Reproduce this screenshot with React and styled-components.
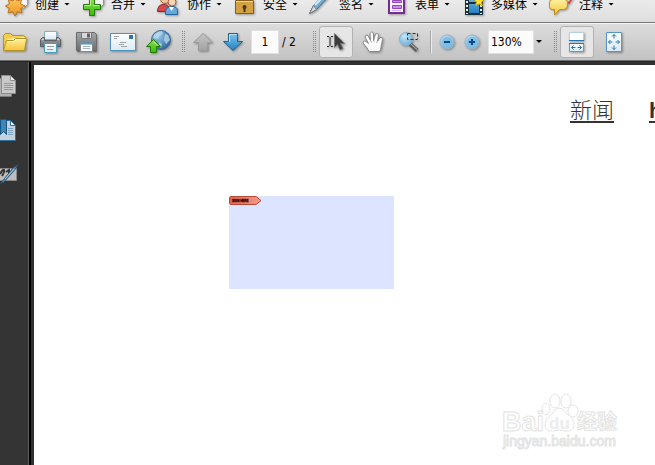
import React, { useState } from 'react';
import styled, { createGlobalStyle } from 'styled-components';

const GlobalStyle = createGlobalStyle`
	* {
		box-sizing: border-box;
	}
	body {
		margin: 0;
		background: #333333;
		font-family: 'DejaVu Sans Condensed', 'Noto Sans CJK SC', sans-serif;
		font-size: 12px;
		color: #000000;
	}
	button, input {
		font: inherit;
		color: inherit;
	}
`;

const Window = styled.div`
	height: 100vh;
	display: flex;
	flex-direction: column;
	overflow: hidden;
`;

const MenuBar = styled.nav`
	flex: none;
	height: 22px;
	display: flex;
	align-items: flex-end;
	gap: 11px;
	padding-left: 5px;
	overflow: hidden;
	background: linear-gradient(#ebebeb, #dedede);
`;

const MenuButton = styled.button`
	flex: none;
	height: 36px;
	display: flex;
	align-items: center;
	padding: 0;
	border: 0;
	background: none;
	line-height: 18px;
	font-family: 'Noto Sans CJK SC', sans-serif;
	white-space: nowrap;

	svg {
		flex: none;
		filter: drop-shadow(1px 1px 1px #00000055);
	}
`;

const MenuLabel = styled.span`
	margin: 0 5px 0 6px;
`;

const Caret = styled.span`
	width: 6px;
	height: 3px;
	background: #000000;
	clip-path: polygon(0 0, 100% 0, 50% 100%);
`;

const ToolBar = styled.div`
	flex: none;
	height: 39px;
	display: flex;
	align-items: center;
	padding-left: 2px;
	overflow: hidden;
	border-top: 1px solid #777777;
	border-bottom: 1px solid #6f6f6f;
	background: linear-gradient(#dddddd, #c2c2c2);
	box-shadow: inset 0 1px 0 #f4f4f4;
`;

const Group = styled.div`
	flex: none;
	display: flex;
	align-items: center;
	gap: ${(props) => props.$gap}px;
`;

const IconButton = styled.button`
	width: ${(props) => props.$width}px;
	height: 32px;
	display: flex;
	align-items: center;
	justify-content: center;
	padding: 0;
	border: 1px solid ${(props) => (props.$active ? '#b2b2b2' : 'transparent')};
	border-radius: 3px;
	background: ${(props) => (props.$active ? '#e6e6e6' : 'none')};

	svg {
		flex: none;
		filter: drop-shadow(1px 1px 1px #00000055);
	}
`;

const Grip = styled.div`
	flex: none;
	width: 4px;
	height: 22px;
	margin: 0 3px 0 9px;
	background: conic-gradient(#8a8a8a 25%, transparent 0) 0 0 / 2px 2px;
`;

const Separator = styled.div`
	flex: none;
	width: 2px;
	height: 22px;
	margin: 0 7px 0 3px;
	border-left: 1px solid #a6a6a6;
	border-right: 1px solid #ececec;
`;

const TextBox = styled.input`
	width: ${(props) => props.$width}px;
	height: 24px;
	padding: ${(props) => (props.$centered ? 0 : '0 2px')};
	border: 1px solid #e0e0e0;
	background: #fbfbfb;
	text-align: ${(props) => (props.$centered ? 'center' : 'left')};
`;

const PageTotal = styled.span`
	width: 21px;
	margin-left: 3px;
`;

const Spaced = styled.div`
	flex: none;
	display: flex;
	align-items: center;
	margin-left: ${(props) => props.$before}px;
`;

const DropButton = styled.button`
	width: 10px;
	height: 24px;
	display: flex;
	align-items: center;
	justify-content: center;
	padding: 0;
	border: 0;
	background: none;
`;

const Body = styled.div`
	flex: 1;
	min-height: 0;
	display: flex;
	border-top: 1px solid #262626;
`;

const SideBar = styled.aside`
	flex: none;
	width: 28px;
	display: flex;
	flex-direction: column;
	align-items: flex-start;
	gap: 12px;
	padding-top: 8px;
	overflow: hidden;
	background: #343434;
`;

const SideButton = styled.button`
	height: 32px;
	display: flex;
	align-items: center;
	padding: 0;
	border: 0;
	background: none;
`;

const Workspace = styled.main`
	flex: 1;
	min-width: 0;
	display: flex;
	padding: 3px 0 0 5px;
	border-left: 1px solid #5c5c5c;
	background: #303030;
	box-shadow: inset 2px 0 0 #000000;
`;

const Page = styled.article`
	position: relative;
	flex: 1;
	min-width: 0;
	overflow: hidden;
	background: #ffffff;
`;

const PageLinks = styled.div`
	display: flex;
	gap: 35px;
	padding: 30px 0 0 536px;
`;

const PageLink = styled.a`
	flex: none;
	color: #333333;
	font-family: 'Liberation Sans', 'Noto Sans CJK SC', sans-serif;
	font-size: 22px;
	font-weight: ${(props) => (props.$strong ? 700 : 300)};
	line-height: 32px;
	text-underline-offset: 3px;
	text-decoration-thickness: 2px;
`;

// Signature field dropped on the page at its own coordinates
const SignField = styled.div`
	position: absolute;
	left: 195px;
	top: 131px;
	width: 165px;
	height: 93px;
	background: #dde4ff;
`;

const SignTag = styled.svg`
	display: block;
`;

const Watermark = styled.svg`
	position: absolute;
	right: 32px;
	bottom: 10px;
`;

// Gradients shared by all the icons
const Gradients = () => (
	<svg width='0' height='0' style={{ position: 'absolute' }} aria-hidden='true'>
		<defs>
			<linearGradient id='gold' x2='0' y2='1'>
				<stop stopColor='#fff0a0' />
				<stop offset='1' stopColor='#f7c437' />
			</linearGradient>
			<linearGradient id='amber' x2='0' y2='1'>
				<stop stopColor='#ffc860' />
				<stop offset='1' stopColor='#ee9420' />
			</linearGradient>
			<linearGradient id='blue' x2='0' y2='1'>
				<stop stopColor='#7cc4ef' />
				<stop offset='1' stopColor='#2580c0' />
			</linearGradient>
			<linearGradient id='green' x2='0' y2='1'>
				<stop stopColor='#8de04e' />
				<stop offset='1' stopColor='#3cb80c' />
			</linearGradient>
			<linearGradient id='grey' x2='0' y2='1'>
				<stop stopColor='#c4c4c4' />
				<stop offset='1' stopColor='#a2a2a2' />
			</linearGradient>
			<linearGradient id='steel' x2='0' y2='1'>
				<stop stopColor='#a3a8aa' />
				<stop offset='1' stopColor='#656b6e' />
			</linearGradient>
			<linearGradient id='paper' x2='0' y2='1'>
				<stop stopColor='#ffffff' />
				<stop offset='1' stopColor='#d9eaf5' />
			</linearGradient>
			<radialGradient id='earth' cx='.35' cy='.3' r='.75'>
				<stop stopColor='#9ccbea' />
				<stop offset='1' stopColor='#2d669c' />
			</radialGradient>
			<radialGradient id='lens' cx='.4' cy='.3' r='.8'>
				<stop stopColor='#c6e6f8' />
				<stop offset='1' stopColor='#65acd9' />
			</radialGradient>
			<linearGradient id='tag'>
				<stop stopColor='#e4604f' />
				<stop offset='1' stopColor='#f59a86' />
			</linearGradient>
		</defs>
	</svg>
);

const StarDoc = () => (
	<svg width='24' height='28' viewBox='0 0 24 28'>
		<path d='M10.500.5h12v14l-4 4h-8z' fill='#f6f6f6' stroke='#9a9a9a' />
		<path
			d='M10 7l2.200 4 4.300-1.500-1 4.300L20 16l-4.200 2.300L17 23l-4.500-1.400L10 26l-2.400-4.400L3 23l1.300-4.700L.5 16l4-2.300L3.300 9.500 8 11z'
			fill='url(#amber)'
			stroke='#b8741c'
		/>
	</svg>
);

const PlusDoc = () => (
	<svg width='24' height='28' viewBox='0 0 24 28'>
		<path d='M10.500.5h12v14l-4 4h-8z' fill='#f3f3f3' stroke='#8e8e8e' />
		<path d='M8.500 8.500h5v6h6v5h-6v6h-5v-6h-6v-5h6z' fill='url(#green)' stroke='#1c7d0b' />
		<path d='M9.500 10v5.500h-6M12 15.500h6' fill='none' stroke='#b9f58e' />
	</svg>
);

const People = () => (
	<svg width='24' height='28' viewBox='0 0 24 28'>
		<circle cx='8' cy='9' r='4.500' fill='#efc49c' stroke='#a06540' />
		<path d='M.5 21.500q0-7 6-7t7 7z' fill='#d5484b' stroke='#8e2428' />
		<circle cx='15' cy='12' r='4' fill='#f7d3b0' stroke='#a5623b' />
		<path d='M8.500 24.500v-4q1-4 6-4 6 0 6 4v4z' fill='#65a8dc' stroke='#24639a' />
		<path d='M12 17l2.500 4 2.500-4z' fill='#ffffff' />
	</svg>
);

const Lock = () => (
	<svg width='24' height='28' viewBox='0 0 24 28'>
		<path d='M6 12V8q0-5 5-5t5 5v4' fill='none' stroke='#888888' strokeWidth='3' />
		<path d='M2.500 10.500h18v13h-18z' fill='#d3a13f' stroke='#86601d' />
		<path d='M3 11.500h17' stroke='#f6d684' />
		<path d='M10.500 17h2v5h-2z' fill='#493414' />
		<circle cx='11.500' cy='17' r='2' fill='#493414' />
	</svg>
);

const Pen = () => (
	<svg width='24' height='28' viewBox='0 0 24 28'>
		<path d='M.5 23.500l4-8L18 1l4 3L7.500 19.500z' fill='#6fadd8' stroke='#4c6b80' />
		<path d='M6 15L18 3' stroke='#d4ecfa' strokeWidth='2' />
		<path d='M.5 23.500l4-8 3 4z' fill='#dddddd' stroke='#777777' />
	</svg>
);

const FormDoc = () => (
	<svg width='24' height='28' viewBox='0 0 24 28'>
		<path d='M4 2h15v21H4z' fill='#fdf8ff' stroke='#762d93' strokeWidth='2' />
		<path d='M7.500 10.500h9v2h-9zM7.500 15.500h9v3h-9z' fill='#cf8ae4' stroke='#9b46b8' />
		<path d='M7 7.500h10' stroke='#9b46b8' />
		<path d='M7 20.500h9' stroke='#d9b3e6' />
	</svg>
);

const Film = () => (
	<svg width='24' height='28' viewBox='0 0 24 28'>
		<path d='M4 2h18v23H4z' fill='#19303d' />
		<path d='M8 4h10v8H8zM8 14h10v9H8z' fill='url(#blue)' />
		<path d='M6 3v21M20 3v21' stroke='#e4edf2' strokeWidth='2' strokeDasharray='2 2' />
		<path d='M18 5l1.500 4 4 .5-3 2.500 1 4-3.500-2-4 2 1.500-4-3-3 4-.5z' fill='#ffe02d' stroke='#c79d0c' />
	</svg>
);

const Comment = () => (
	<svg width='24' height='28' viewBox='0 0 24 28'>
		<path d='M14 16l4-4 2 1 4-6' fill='none' stroke='#e0443a' strokeWidth='2' />
		<path
			d='M3.500 9.500h12q3 0 3 3v3q0 4-4 4h-4l-5 5.500V19.500h-2q-3 0-3-3v-4q0-3 3-3z'
			fill='url(#gold)'
			stroke='#c18a14'
		/>
	</svg>
);

const Folder = () => (
	<svg width='26' height='26' viewBox='0 0 26 26'>
		<path d='M1.500 21.500v-15l2-2h5l2 2h11l2 2v12z' fill='#f5cc4e' stroke='#b8922c' />
		<path d='M3.500 19l2-9 17-2v10z' fill='#fff7c0' />
		<path d='M1.500 21.500l3-10h7l2-2h11l-2 12z' fill='url(#gold)' stroke='#b8922c' />
		<path d='M5.500 12.500H12l2-2h9' fill='none' stroke='#fff8cc' />
	</svg>
);

const Printer = () => (
	<svg width='26' height='26' viewBox='0 0 26 26'>
		<path d='M6.500 2.500h12v8h-12z' fill='url(#paper)' stroke='#8faebb' />
		<path d='M2.500 17.500v-7l2-2h2v3h12v-3h2l2 2v7z' fill='url(#steel)' stroke='#5c6163' />
		<path d='M4 10.500h2M19 10.500h2' stroke='#d6dadb' />
		<path d='M6.500 14.500h12v9h-12z' fill='url(#paper)' stroke='#4f9cc2' />
		<path d='M9 17.500h7M9 20.500h6' stroke='#8f9ea6' />
	</svg>
);

const Floppy = () => (
	<svg width='26' height='26' viewBox='0 0 26 26'>
		<path d='M2.500 3.500h18l2 2v17h-19l-1-1z' fill='url(#steel)' stroke='#6b6b6b' />
		<path d='M7.500 3.500h10v6h-10z' fill='#d9d9d9' stroke='#777777' />
		<path d='M13 4.500h3v4h-3z' fill='#606060' />
		<path d='M6.500 13.500h12v9h-12z' fill='#f4faff' stroke='#888888' />
		<path d='M7 14.500h11' stroke='#5793c4' strokeWidth='2' />
		<path d='M9 17.500h7M9 19.500h7' stroke='#a9b9c4' />
	</svg>
);

const Mail = () => (
	<svg width='26' height='26' viewBox='0 0 26 26'>
		<path d='M.5 4.500h25v17H.5z' fill='url(#paper)' stroke='#4d93c3' />
		<path d='M19 6h4v4h-4z' fill='#2e76b3' />
		<path d='M4 7.500h5M4 9.500h3M10 13.500h6M9 15.500h5M11 17.500h6' stroke='#a3a3a3' />
	</svg>
);

const Globe = () => (
	<svg width='26' height='26' viewBox='0 0 26 26'>
		<circle cx='15' cy='11' r='9.500' fill='url(#earth)' stroke='#376a98' />
		<path
			d='M8 6q4-4 8-4l1 3-4 2-2 3-4-1zM19 5l3 1 2 5-4 4-2-4zM13 13l3 2-1 4-2-2z'
			fill='#c4deef'
			opacity='.7'
		/>
		<path d='M7.500 10.500l7 7h-4v6h-6v-6h-4z' fill='url(#green)' stroke='#207c0c' />
		<path d='M7.500 12.500l4 4' fill='none' stroke='#c5f7a0' />
	</svg>
);

const Arrow = ({ down }) => (
	<svg width='20' height='20' viewBox='0 0 20 20'>
		{down ? (
			<>
				<path d='M5.500 1.500h9v8h5l-9.500 9-9.500-9h5z' fill='url(#blue)' stroke='#24618d' />
				<path d='M6.500 10V2.500h7' fill='none' stroke='#b5e0f7' />
			</>
		) : (
			<path d='M10 1.500l9.500 9h-5v8h-9v-8h-5z' fill='url(#grey)' stroke='#9c9c9c' />
		)}
	</svg>
);

const TextCursor = () => (
	<svg width='20' height='20' viewBox='0 0 20 20'>
		<path d='M1 4.500h2M5 4.500h2M4 5v9M1 14.500h2M5 14.500h2' fill='none' stroke='#222222' />
		<path d='M8.500 1.500v14l3-3 2.500 5.500 3-1.500-2.500-5h4z' fill='#3c3c3c' stroke='#777777' />
	</svg>
);

const Hand = () => (
	<svg width='24' height='24' viewBox='0 0 24 24'>
		<path
			d='M8 21.500q-1-3-6-8.500 0-3 3-1.500l2.500 2L4 7q.5-3 3-1.500l2.500 5L9 3.500q1.500-3 3.500 0v7l2-6.500q2.500-1.500 3 1l-1 6.500L19 7.500q3-1 2.500 2L20 17q0 3.500-2 4.500z'
			fill='#fbfbfb'
			stroke='#8a8a8a'
		/>
		<path d='M9.500 10.500l1 2M13 10v2M16.500 11l-1 2' stroke='#b5b5b5' />
	</svg>
);

const Marquee = () => (
	<svg width='24' height='24' viewBox='0 0 24 24'>
		<path d='M12 14l7 6.500' stroke='#5f5f5f' strokeWidth='4' />
		<path d='M12.500 13.500l7 6.500' stroke='#b9b9b9' />
		<circle cx='8' cy='9' r='6.500' fill='url(#lens)' stroke='#8fb0c4' />
		<path d='M9.500 3.500h10v6h-10z' fill='none' stroke='#333333' strokeDasharray='3 2' />
	</svg>
);

const ZoomDot = ({ plus }) => (
	<svg width='16' height='16' viewBox='0 0 16 16'>
		<circle cx='8' cy='8' r='7' fill='url(#lens)' stroke='#9db6c5' />
		<circle cx='8' cy='8' r='5' fill='#7fbde4' />
		<path d={plus ? 'M5 8h6M8 5v6' : 'M5 8h6'} stroke='#0a4c80' strokeWidth='2' />
	</svg>
);

const FitWidth = () => (
	<svg width='16' height='22' viewBox='0 0 16 22'>
		<path d='M.5 1.500h14v8H.5z' fill='#ffffff' stroke='#b4cfe0' />
		<path d='M.5 12.500h14v8H.5z' fill='url(#paper)' stroke='#5c9fcb' />
		<path d='M0 9.500h15M0 12.500h15' stroke='#2477b0' />
		<path d='M2.500 16.500h4M8.500 16.500h4M4.500 14.500l-2 2 2 2M10.500 14.500l2 2-2 2' fill='none' stroke='#2477b0' />
	</svg>
);

const FitPage = () => (
	<svg width='17' height='22' viewBox='0 0 17 22'>
		<path d='M.5 1.500h15v19H.5z' fill='url(#paper)' stroke='#5398c8' />
		<path
			d='M8 3.500v4M8 14.500v4M2.500 11h4M9.500 11h4M6 5.500l2-2 2 2M6 16.500l2 2 2-2M4.500 9l-2 2 2 2M11.500 9l2 2-2 2'
			fill='none'
			stroke='#2477b0'
		/>
	</svg>
);

const PagesIcon = () => (
	<svg width='18' height='24' viewBox='0 0 18 24'>
		<path d='M-1.500 4.500h13v18h-13z' fill='#b0b0b0' stroke='#7d7d7d' />
		<path d='M1.500 1.500h9l5 5v13h-14z' fill='#c9c9c9' stroke='#8d8d8d' />
		<path d='M10.500 1.500v5h5z' fill='#ececec' stroke='#8d8d8d' />
		<path d='M4 9.500h9M4 11.500h9M4 13.500h9M4 15.500h9' stroke='#989898' />
	</svg>
);

const BookmarkIcon = () => (
	<svg width='18' height='24' viewBox='0 0 18 24'>
		<path d='M-1.500 2.500h12l5 5v15h-17z' fill='#c3d2dd' stroke='#2f6f9e' />
		<path d='M10.500 2.500v5h5z' fill='#eef5f9' stroke='#2f6f9e' />
		<path d='M8 10.500h5M8 12.500h5M8 14.500h5M8 16.500h5' stroke='#7fa3bd' />
		<path d='M.5 1.500h6v15l-3-3-3 3z' fill='#3e86b8' stroke='#155582' />
	</svg>
);

const SignIcon = () => (
	<svg width='20' height='24' viewBox='0 0 20 24'>
		<path d='M-1.500 6.500h18v12h-18z' fill='#bdbdbd' stroke='#888888' />
		<path d='M0 12q3-5 4-4t-2 6M6 10l3-2v3' fill='none' stroke='#333333' strokeWidth='2' />
		<path d='M.5 21.500L13 6l5-3.500-3 5L4 20z' fill='#5b9ac6' stroke='#2e4f68' />
		<path d='M5 17L14 7' stroke='#a9d0ea' />
	</svg>
);

const menus = [
	{ label: '创建', icon: <StarDoc /> },
	{ label: '合并', icon: <PlusDoc /> },
	{ label: '协作', icon: <People /> },
	{ label: '安全', icon: <Lock /> },
	{ label: '签名', icon: <Pen /> },
	{ label: '表单', icon: <FormDoc /> },
	{ label: '多媒体', icon: <Film /> },
	{ label: '注释', icon: <Comment /> }
];

const fileTools = [
	{ label: '打开', icon: <Folder /> },
	{ label: '打印', icon: <Printer /> },
	{ label: '保存', icon: <Floppy /> },
	{ label: '电子邮件', icon: <Mail /> },
	{ label: '上传', icon: <Globe /> }
];

const cursorTools = [
	{ label: '选择', icon: <TextCursor /> },
	{ label: '手形', icon: <Hand /> },
	{ label: '选框缩放', icon: <Marquee /> }
];

const fitTools = [
	{ label: '适合宽度', icon: <FitWidth /> },
	{ label: '适合页面', icon: <FitPage /> }
];

const sideTools = [
	{ label: '页面', icon: <PagesIcon /> },
	{ label: '书签', icon: <BookmarkIcon /> },
	{ label: '签名', icon: <SignIcon /> }
];

const App = () => {
	const [ page, setPage ] = useState('1');
	const [ zoom, setZoom ] = useState('130%');
	const [ cursor, setCursor ] = useState(0);
	const [ fit, setFit ] = useState(0);

	return (
		<Window>
			<GlobalStyle />
			<Gradients />
			<MenuBar>
				{menus.map((menu) => (
					<MenuButton key={menu.label}>
						{menu.icon}
						<MenuLabel>{menu.label}</MenuLabel>
						<Caret />
					</MenuButton>
				))}
			</MenuBar>
			<ToolBar>
				<Group $gap={10}>
					{fileTools.map((tool) => (
						<IconButton key={tool.label} $width={26} aria-label={tool.label}>
							{tool.icon}
						</IconButton>
					))}
				</Group>
				<Grip />
				<Spaced $before={5}>
					<Group $gap={10}>
						<IconButton $width={20} aria-label='上一页'>
							<Arrow />
						</IconButton>
						<IconButton $width={20} aria-label='下一页'>
							<Arrow down />
						</IconButton>
					</Group>
				</Spaced>
				<Spaced $before={8}>
					<TextBox
						$width={28}
						$centered
						aria-label='页码'
						value={page}
						onChange={(e) => setPage(e.target.value)}
					/>
					<PageTotal>/ 2</PageTotal>
				</Spaced>
				<Grip />
				<Group $gap={3}>
					{cursorTools.map((tool, i) => (
						<IconButton
							key={tool.label}
							$width={34}
							$active={cursor === i}
							aria-label={tool.label}
							onClick={() => setCursor(i)}
						>
							{tool.icon}
						</IconButton>
					))}
				</Group>
				<Separator />
				<Group $gap={9}>
					<IconButton $width={16} aria-label='缩小'>
						<ZoomDot />
					</IconButton>
					<IconButton $width={16} aria-label='放大'>
						<ZoomDot plus />
					</IconButton>
				</Group>
				<Spaced $before={8}>
					<TextBox $width={46} aria-label='缩放' value={zoom} onChange={(e) => setZoom(e.target.value)} />
					<DropButton aria-label='缩放比例'>
						<Caret />
					</DropButton>
				</Spaced>
				<Grip />
				<Group $gap={3}>
					{fitTools.map((tool, i) => (
						<IconButton
							key={tool.label}
							$width={34}
							$active={fit === i}
							aria-label={tool.label}
							onClick={() => setFit(i)}
						>
							{tool.icon}
						</IconButton>
					))}
				</Group>
			</ToolBar>
			<Body>
				<SideBar>
					{sideTools.map((tool) => (
						<SideButton key={tool.label} aria-label={tool.label}>
							{tool.icon}
						</SideButton>
					))}
				</SideBar>
				<Workspace>
					<Page>
						<PageLinks>
							<PageLink href='#news'>新闻</PageLink>
							<PageLink href='#hao123' $strong>
								hao123
							</PageLink>
						</PageLinks>
						<SignField>
							<SignTag width='33' height='9' viewBox='0 0 33 9'>
								<path d='M1.500.5H27l5 4-5 4H1.500l-1-1v-6z' fill='url(#tag)' stroke='#b8483a' />
								<text
									x='3'
									y='6'
									fontSize='3'
									fontWeight='700'
									fontFamily='Liberation Sans, sans-serif'
									fill='#2a0a06'
									stroke='#2a0a06'
									strokeWidth='.3'
								>
									SIGN HERE
								</text>
							</SignTag>
						</SignField>
						<Watermark width='122' height='66' viewBox='0 0 122 66' fill='#ffffff' stroke='#e4e4e4'>
							<ellipse cx='45' cy='20' rx='4' ry='6' />
							<ellipse cx='54' cy='12' rx='5' ry='7' />
							<ellipse cx='65' cy='12' rx='5' ry='7' />
							<ellipse cx='72' cy='22' rx='5' ry='6' />
							<path d='M58 19q5 0 8 6 8 5 7 11-1 7-8 6-7-2-13 0-8 1-8-6 0-6 7-11 3-6 7-6z' />
							<g fontFamily='Liberation Sans, sans-serif' fontWeight='700'>
								<text x='1' y='42' fontSize='27'>
									Bai
								</text>
								<text x='48' y='40' fontSize='17' fill='#ececec' stroke='none'>
									du
								</text>
								<text x='76' y='40' fontSize='20' fontFamily='Noto Sans CJK SC, sans-serif'>
									经验
								</text>
								<text x='2' y='57' fontSize='14' fontWeight='400' fill='#f4f4f4'>
									jingyan.baidu.com
								</text>
							</g>
						</Watermark>
					</Page>
				</Workspace>
			</Body>
		</Window>
	);
};

export default App;
